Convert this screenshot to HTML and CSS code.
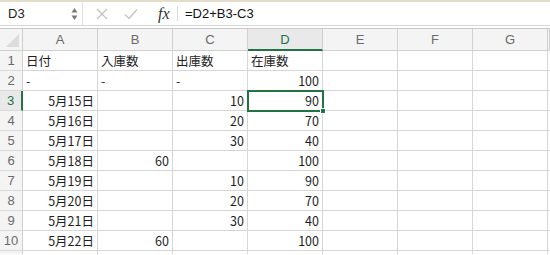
FILE: index.html
```html
<!DOCTYPE html>
<html lang="ja">
<head>
<meta charset="utf-8">
<link rel="stylesheet" href="styles.css">
</head>
<body>
<div class="app">
  <div class="fbar">
    <div class="namebox">
      <span class="ref">D3</span>
      <span class="spin"><svg width="7" height="14" viewBox="0 0 7 14"><path d="M3.5 1 L6.5 5.5 L0.5 5.5 Z" fill="#7a7a7a"/><path d="M3.5 13 L6.5 8.5 L0.5 8.5 Z" fill="#7a7a7a"/></svg></span>
    </div>
    <div class="tools">
      <svg class="ic" width="12" height="12" viewBox="0 0 12 12"><path d="M1 1 L11 11 M11 1 L1 11" stroke="#c4c4c4" stroke-width="1.4" fill="none"/></svg>
      <svg class="ic" width="14" height="12" viewBox="0 0 14 12"><path d="M1 6.5 L5 10.5 L13 1.5" stroke="#c4c4c4" stroke-width="1.4" fill="none"/></svg>
      <span class="fx">fx</span>
    </div>
    <div class="formula">=D2+B3-C3</div>
  </div>
  <div class="gap"></div>
  <div class="sheet">
    <div class="corner"><span class="tri"></span></div>
    <div class="ch">A</div><div class="ch">B</div><div class="ch">C</div><div class="ch sel">D</div><div class="ch">E</div><div class="ch">F</div><div class="ch">G</div><div class="ch"></div>

    <div class="rh">1</div><div class="c">日付</div><div class="c">入庫数</div><div class="c">出庫数</div><div class="c">在庫数</div><div class="c"></div><div class="c"></div><div class="c"></div><div class="c"></div>
    <div class="rh">2</div><div class="c">-</div><div class="c">-</div><div class="c">-</div><div class="c r">100</div><div class="c"></div><div class="c"></div><div class="c"></div><div class="c"></div>
    <div class="rh sel">3</div><div class="c r">5月15日</div><div class="c"></div><div class="c r">10</div><div class="c r active">90<span class="handle"></span></div><div class="c"></div><div class="c"></div><div class="c"></div><div class="c"></div>
    <div class="rh">4</div><div class="c r">5月16日</div><div class="c"></div><div class="c r">20</div><div class="c r">70</div><div class="c"></div><div class="c"></div><div class="c"></div><div class="c"></div>
    <div class="rh">5</div><div class="c r">5月17日</div><div class="c"></div><div class="c r">30</div><div class="c r">40</div><div class="c"></div><div class="c"></div><div class="c"></div><div class="c"></div>
    <div class="rh">6</div><div class="c r">5月18日</div><div class="c r">60</div><div class="c"></div><div class="c r">100</div><div class="c"></div><div class="c"></div><div class="c"></div><div class="c"></div>
    <div class="rh">7</div><div class="c r">5月19日</div><div class="c"></div><div class="c r">10</div><div class="c r">90</div><div class="c"></div><div class="c"></div><div class="c"></div><div class="c"></div>
    <div class="rh">8</div><div class="c r">5月20日</div><div class="c"></div><div class="c r">20</div><div class="c r">70</div><div class="c"></div><div class="c"></div><div class="c"></div><div class="c"></div>
    <div class="rh">9</div><div class="c r">5月21日</div><div class="c"></div><div class="c r">30</div><div class="c r">40</div><div class="c"></div><div class="c"></div><div class="c"></div><div class="c"></div>
    <div class="rh">10</div><div class="c r">5月22日</div><div class="c r">60</div><div class="c"></div><div class="c r">100</div><div class="c"></div><div class="c"></div><div class="c"></div><div class="c"></div>
    <div class="rh last"></div><div class="c last"></div><div class="c last"></div><div class="c last"></div><div class="c last"></div><div class="c last"></div><div class="c last"></div><div class="c last"></div><div class="c last"></div>
  </div>
</div>
</body>
</html>
```

FILE: styles.css
```css
* { box-sizing: border-box; }
html, body { margin: 0; padding: 0; background: #fff; }
body {
  width: 550px; height: 255px; overflow: hidden;
  font-family: "Noto Sans CJK JP", "Noto Sans", sans-serif;
  font-size: 12px; color: #222;
}
.app { width: 550px; }
.fbar {
  height: 26px;
  display: flex;
  border-top: 2px solid #e6dccb;
  border-bottom: 1px solid #d8d8d8;
  background: #fff;
}
.namebox {
  width: 83px;
  display: flex; align-items: center; justify-content: space-between;
  padding: 0 4px 0 8px;
  border-right: 1px solid #e2e2e2;
}
.ref { font-size: 13px; color: #222; font-family: "Liberation Sans", "Noto Sans", sans-serif; }
.spin { display: flex; align-items: center; }
.tools {
  width: 95px;
  display: flex; align-items: center;
  padding-left: 13px; gap: 16px;
  border-right: 1px solid #d8d8d8;
  margin: 4px 0;
}
.ic { display: block; }
.fx {
  font-family: "Liberation Serif", serif; font-style: italic;
  font-size: 16px; color: #333; margin-left: 4px;
}
.formula {
  flex: 1; display: flex; align-items: center;
  padding-left: 7px;
  font-family: "Liberation Sans", "Noto Sans", sans-serif;
  font-size: 13px; color: #111;
}
.gap {
  height: 3px;
  border-bottom: 1px solid #c8c8c8;
  background: #fff;
}
.sheet {
  display: grid;
  grid-template-columns: 23px repeat(7, 75px) 2px;
  grid-template-rows: 22px repeat(10, 20px) 3px;
}
.corner {
  background: #f4f4f4;
  border-right: 1px solid #d0d0d0;
  border-bottom: 1px solid #d0d0d0;
  position: relative;
}
.tri {
  position: absolute; right: 3px; bottom: 3px;
  width: 0; height: 0;
  border-left: 13px solid transparent;
  border-bottom: 13px solid #dcdcdc;
}
.ch {
  background: #f4f4f4;
  border-right: 1px solid #d0d0d0;
  border-bottom: 1px solid #cfcfcf;
  display: flex; align-items: center; justify-content: center;
  font-family: "Liberation Sans", "Noto Sans", sans-serif;
  font-size: 13px; color: #6a6a6a;
}
.ch.sel {
  background: #e9e9e9;
  color: #217346;
  border-bottom: 2px solid #217346;
}
.rh {
  background: #f4f4f4;
  border-right: 1px solid #d0d0d0;
  border-bottom: 1px solid #dadada;
  display: flex; align-items: center; justify-content: center;
  font-family: "Liberation Sans", "Noto Sans", sans-serif;
  font-size: 13px; color: #6a6a6a;
}
.rh.sel {
  color: #217346;
  background: #e9e9e9;
  border-right: 2px solid #217346;
}
.c {
  border-right: 1px solid #d6d6d6;
  border-bottom: 1px solid #d6d6d6;
  display: flex; align-items: center;
  padding: 0 3px 0 3px;
  font-size: 12.5px; color: #1e1e1e;
  white-space: nowrap;
  position: relative;
}
.last { border-bottom: none; }
.c.r { justify-content: flex-end; }
.c.active {
  outline: 2px solid #217346;
  outline-offset: -1px;
  z-index: 2;
}
.handle {
  position: absolute; right: -4px; bottom: -4px;
  width: 6px; height: 6px;
  background: #217346;
  border: 1px solid #fff;
}
```
